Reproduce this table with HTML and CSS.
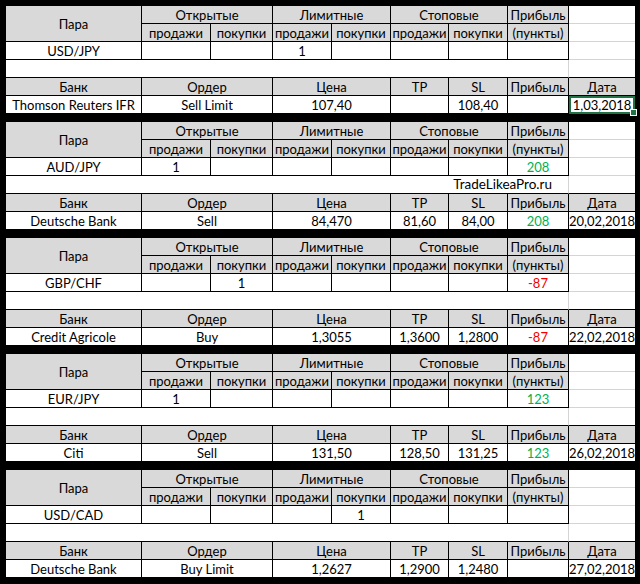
FILE: index.html
```html
<!DOCTYPE html>
<html lang="ru">
<head>
<meta charset="utf-8">
<title>Сделки</title>
<link rel="stylesheet" href="styles.css">
</head>
<body>
<div class="sheet">

  <div class="block">
    <div class="c h pair">Пара</div>
    <div class="c h s2">Открытые</div>
    <div class="c h s2">Лимитные</div>
    <div class="c h s2">Стоповые</div>
    <div class="c h">Прибыль</div>
    <div class="g"></div>
    <div class="c h">продажи</div><div class="c h">покупки</div>
    <div class="c h">продажи</div><div class="c h">покупки</div>
    <div class="c h">продажи</div><div class="c h">покупки</div>
    <div class="c h">(пункты)</div>
    <div class="g"></div>
    <div class="c">USD/JPY</div><div class="c"></div><div class="c"></div><div class="c">1</div><div class="c"></div><div class="c"></div><div class="c"></div><div class="c"></div>
    <div class="g"></div>
    <div class="blank"></div><div class="g gb"></div>
    <div class="c h">Банк</div><div class="c h s2">Ордер</div><div class="c h s2">Цена</div><div class="c h">TP</div><div class="c h">SL</div><div class="c h">Прибыль</div><div class="c h last">Дата</div>
    <div class="c">Thomson Reuters IFR</div><div class="c s2">Sell Limit</div><div class="c s2">107,40</div><div class="c"></div><div class="c">108,40</div><div class="c"></div><div class="c last selected">1,03,2018</div>
  </div>

  <div class="block">
    <div class="c h pair">Пара</div>
    <div class="c h s2">Открытые</div>
    <div class="c h s2">Лимитные</div>
    <div class="c h s2">Стоповые</div>
    <div class="c h">Прибыль</div>
    <div class="g"></div>
    <div class="c h">продажи</div><div class="c h">покупки</div>
    <div class="c h">продажи</div><div class="c h">покупки</div>
    <div class="c h">продажи</div><div class="c h">покупки</div>
    <div class="c h">(пункты)</div>
    <div class="g"></div>
    <div class="c">AUD/JPY</div><div class="c">1</div><div class="c"></div><div class="c"></div><div class="c"></div><div class="c"></div><div class="c"></div><div class="c pos">208</div>
    <div class="g"></div>
    <div class="blank"><span class="wm">TradeLikeaPro.ru</span></div><div class="g gb"></div>
    <div class="c h">Банк</div><div class="c h s2">Ордер</div><div class="c h s2">Цена</div><div class="c h">TP</div><div class="c h">SL</div><div class="c h">Прибыль</div><div class="c h last">Дата</div>
    <div class="c">Deutsche Bank</div><div class="c s2">Sell</div><div class="c s2">84,470</div><div class="c">81,60</div><div class="c">84,00</div><div class="c pos">208</div><div class="c last">20,02,2018</div>
  </div>

  <div class="block">
    <div class="c h pair">Пара</div>
    <div class="c h s2">Открытые</div>
    <div class="c h s2">Лимитные</div>
    <div class="c h s2">Стоповые</div>
    <div class="c h">Прибыль</div>
    <div class="g"></div>
    <div class="c h">продажи</div><div class="c h">покупки</div>
    <div class="c h">продажи</div><div class="c h">покупки</div>
    <div class="c h">продажи</div><div class="c h">покупки</div>
    <div class="c h">(пункты)</div>
    <div class="g"></div>
    <div class="c">GBP/CHF</div><div class="c"></div><div class="c">1</div><div class="c"></div><div class="c"></div><div class="c"></div><div class="c"></div><div class="c neg">-87</div>
    <div class="g"></div>
    <div class="blank"></div><div class="g gb"></div>
    <div class="c h">Банк</div><div class="c h s2">Ордер</div><div class="c h s2">Цена</div><div class="c h">TP</div><div class="c h">SL</div><div class="c h">Прибыль</div><div class="c h last">Дата</div>
    <div class="c">Credit Agricole</div><div class="c s2">Buy</div><div class="c s2">1,3055</div><div class="c">1,3600</div><div class="c">1,2800</div><div class="c neg">-87</div><div class="c last">22,02,2018</div>
  </div>

  <div class="block">
    <div class="c h pair">Пара</div>
    <div class="c h s2">Открытые</div>
    <div class="c h s2">Лимитные</div>
    <div class="c h s2">Стоповые</div>
    <div class="c h">Прибыль</div>
    <div class="g"></div>
    <div class="c h">продажи</div><div class="c h">покупки</div>
    <div class="c h">продажи</div><div class="c h">покупки</div>
    <div class="c h">продажи</div><div class="c h">покупки</div>
    <div class="c h">(пункты)</div>
    <div class="g"></div>
    <div class="c">EUR/JPY</div><div class="c">1</div><div class="c"></div><div class="c"></div><div class="c"></div><div class="c"></div><div class="c"></div><div class="c pos">123</div>
    <div class="g"></div>
    <div class="blank"></div><div class="g gb"></div>
    <div class="c h">Банк</div><div class="c h s2">Ордер</div><div class="c h s2">Цена</div><div class="c h">TP</div><div class="c h">SL</div><div class="c h">Прибыль</div><div class="c h last">Дата</div>
    <div class="c">Citi</div><div class="c s2">Sell</div><div class="c s2">131,50</div><div class="c">128,50</div><div class="c">131,25</div><div class="c pos">123</div><div class="c last">26,02,2018</div>
  </div>

  <div class="block">
    <div class="c h pair">Пара</div>
    <div class="c h s2">Открытые</div>
    <div class="c h s2">Лимитные</div>
    <div class="c h s2">Стоповые</div>
    <div class="c h">Прибыль</div>
    <div class="g"></div>
    <div class="c h">продажи</div><div class="c h">покупки</div>
    <div class="c h">продажи</div><div class="c h">покупки</div>
    <div class="c h">продажи</div><div class="c h">покупки</div>
    <div class="c h">(пункты)</div>
    <div class="g"></div>
    <div class="c">USD/CAD</div><div class="c"></div><div class="c"></div><div class="c"></div><div class="c">1</div><div class="c"></div><div class="c"></div><div class="c"></div>
    <div class="g"></div>
    <div class="blank"></div><div class="g gb"></div>
    <div class="c h">Банк</div><div class="c h s2">Ордер</div><div class="c h s2">Цена</div><div class="c h">TP</div><div class="c h">SL</div><div class="c h">Прибыль</div><div class="c h last">Дата</div>
    <div class="c">Deutsche Bank</div><div class="c s2">Buy Limit</div><div class="c s2">1,2627</div><div class="c">1,2900</div><div class="c">1,2480</div><div class="c"></div><div class="c last">27,02,2018</div>
  </div>

</div>
</body>
</html>
```

FILE: styles.css
```css
* { box-sizing: border-box; }

html, body {
  margin: 0;
  padding: 0;
  background: #000;
}

body {
  width: 640px;
  height: 584px;
  overflow: hidden;
  font-family: Lato, "Liberation Sans", sans-serif;
  font-size: 13px;
  color: #000;
}

.sheet {
  background: #000;
  padding: 6px 5px 6px 6px;
  display: flex;
  flex-direction: column;
  gap: 8px;
  height: 584px;
}

.block {
  display: grid;
  grid-template-columns: 136px 69px 62px 59px 59px 58px 59px 61px 66px;
  grid-template-rows: repeat(6, 18px);
  background: #fff;
}

.c {
  display: flex;
  align-items: center;
  justify-content: center;
  border-right: 1px solid #000;
  border-bottom: 1px solid #000;
  background: #fff;
  white-space: nowrap;
  line-height: 1;
  padding-top: 1px;
}

.h { background: #d9d9d9; }

.s2 { grid-column: span 2; }

.pair { grid-row: span 2; }

.last { border-right: none; }

.g {
  background: #fff;
  border-bottom: 1px solid #d4d4d4;
}

.gb { border-bottom: 1px solid #000; }

.blank {
  grid-column: span 8;
  background: #fff;
  border-right: 1px solid #d4d4d4;
  border-bottom: 1px solid #000;
  display: flex;
  align-items: center;
  justify-content: flex-end;
  padding: 1px 16px 0 0;
}

.wm {
  font-size: 13.5px;
  color: #000;
  line-height: 1;
}

.pos { color: #00b050; }
.neg { color: #f00000; }

.selected {
  position: relative;
  outline: 2px solid #217346;
  outline-offset: -2px;
}

.selected::after {
  content: "";
  position: absolute;
  right: -2px;
  bottom: -3px;
  width: 5px;
  height: 5px;
  background: #217346;
  border: 1px solid #fff;
}
```
